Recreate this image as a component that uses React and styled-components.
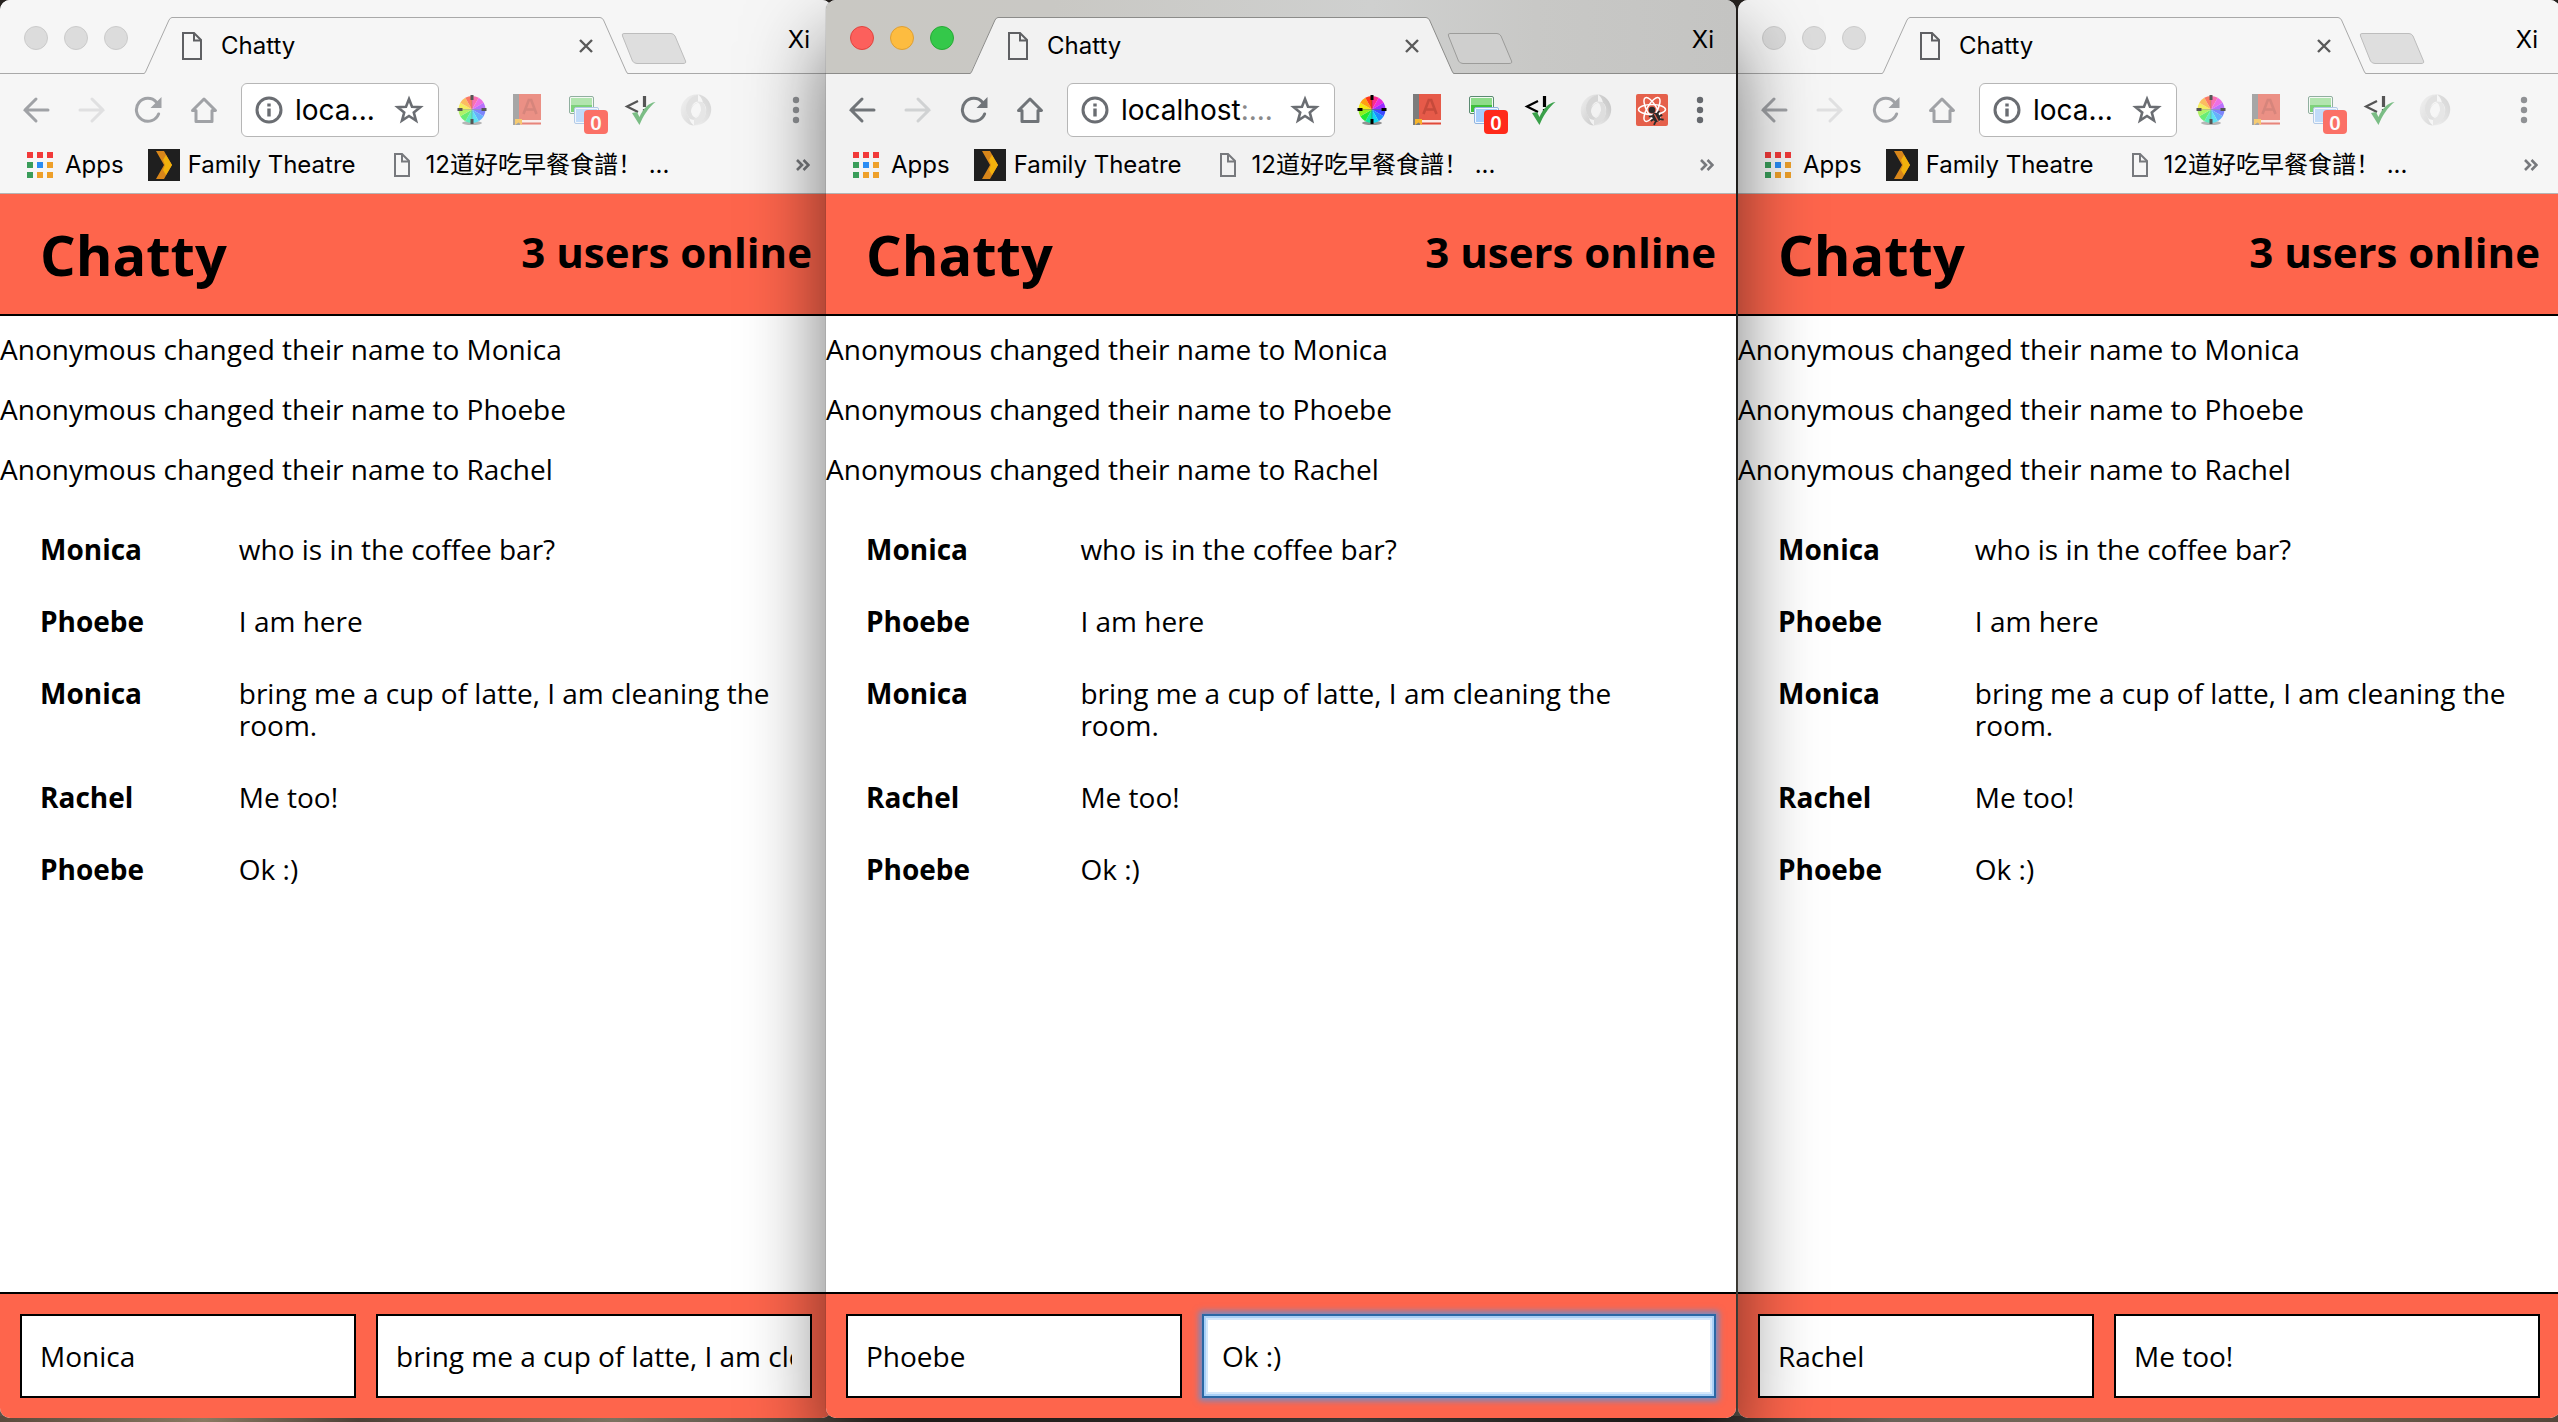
import React from "react";
import styled, { createGlobalStyle, css } from "styled-components";

const GlobalStyle = createGlobalStyle`
  *, *::before, *::after { box-sizing: border-box; }
  body { margin: 0; background: #2b2622; }
  h1, h2, p { margin: 0; }
`;

const chromeFont = `Inter, "Noto Sans CJK SC", sans-serif`;
const pageFont = `"Open Sans", sans-serif`;

/* ---------- desktop and window frame ---------- */

const Desktop = styled.main`
  display: grid;
  grid-template-columns: 826fr 910fr 822fr;
  grid-template-rows: minmax(0, 1fr);
  min-height: 100vh;
  padding-bottom: 4px;
  overflow: hidden;
  background:
    linear-gradient(90deg, #5a4a3c, #8a7a62 8%, #4d4036 14%, #7c7260 24%, #3c3530 36%, #4b443e 44%, #77736e 53%, #4a4540 60%, #2e2a27 66%, #6a6258 74%, #7a6a54 86%, #54463a) bottom / 100% 6px no-repeat,
    linear-gradient(#26221f, #3f4442 50%, #5a564c);
`;

const Frame = styled.section`
  display: flex;
  flex-direction: column;
  min-width: 0;
  border-radius: 10px;
  background: #fff;
  margin-left: ${(p) => p.$gapLeft || 0}px;
  margin-right: -${(p) => p.$overhang || 0}px;
  ${(p) =>
    p.$active &&
    css`
      position: relative;
      z-index: 1;
      box-shadow: 0 0 1px rgba(0, 0, 0, 0.7), 0 40px 80px rgba(0, 0, 0, 0.56);
    `}
`;

const BareButton = styled.button`
  display: flex;
  align-items: center;
  justify-content: center;
  padding: 0;
  border: 0;
  background: none;
  color: inherit;
  font: inherit;
`;

/* ---------- tab strip ---------- */

const TabStrip = styled.div`
  display: flex;
  height: 74px;
  flex: none;
  padding: 0 22px 0 24px;
  border-radius: 10px 10px 0 0;
  font: 24px/32px ${chromeFont};
  color: #000;
  background: ${(p) =>
    p.$active
      ? "linear-gradient(90deg, #c9c8c3, #c9c8c4 25%, #cfd0cf 60%, #c8c8c6 78%, #c4c4c2)"
      : "#f6f6f6"};
  box-shadow: inset 0 -1px ${(p) => (p.$active ? "#8c8c8a" : "#a9a9a9")};
`;

const Lights = styled.div`
  display: flex;
  gap: 16px;
  width: 120px;
  padding-top: 26px;
`;

const Light = styled(BareButton)`
  width: 24px;
  height: 24px;
  border-radius: 50%;
  background: ${(p) => p.$fill};
  border: 1px solid ${(p) => p.$edge};
`;

const Tab = styled.div`
  position: relative;
  display: flex;
  align-items: center;
  width: 484px;
  height: 57px;
  margin-top: 17px;
  padding: 0 35px 0 38px;
  gap: 19px;
`;

const TabShape = styled.svg`
  position: absolute;
  inset: 0;
`;

const TabTitle = styled.span`
  position: relative;
  flex: 1;
`;

const TabClose = styled(BareButton)`
  position: relative;
  width: 14px;
  height: 14px;
`;

const TabIcon = styled.svg`
  position: relative;
`;

const NewTab = styled(BareButton)`
  height: 32px;
  margin: 33px 0 0 -7px;
`;

const Profile = styled(BareButton)`
  height: 32px;
  margin: 24px 0 0 auto;
`;

/* ---------- toolbar ---------- */

const ChromeBody = styled.div`
  display: flex;
  flex-direction: column;
  flex: none;
  height: 120px;
  border-bottom: 1px solid #b4b4b4;
  background: ${(p) => (p.$active ? "#f2f2f2" : "#f6f6f6")};
  font-family: ${chromeFont};
`;

const Toolbar = styled.div`
  display: flex;
  align-items: center;
  padding: 9px 16px 0 8px;
`;

const NavButton = styled(BareButton)`
  width: 56px;
  height: 54px;
  color: ${(p) => (p.$active ? "#707478" : "#a0a2a6")};
  opacity: ${(p) => (p.$disabled ? 0.25 : 1)};
`;

const AddressBar = styled.div`
  display: flex;
  align-items: center;
  flex: 1;
  min-width: 0;
  height: 54px;
  margin: 0 ${(p) => p.$gap}px 0 9px;
  padding: 0 14px 0 13px;
  border: 1px solid #b6b6b6;
  border-radius: 6px;
  background: #fff;
  color: #6a6d72;
`;

const AddressInput = styled.input`
  field-sizing: content;
  min-width: 0;
  margin-left: 12px;
  padding: 0;
  border: 0;
  outline: 0;
  background: none;
  color: #000;
  font: 28px/36px ${chromeFont};
`;

const AddressRest = styled.span`
  color: #8a8a8a;
  font: 28px/36px ${chromeFont};
`;

const StarButton = styled(BareButton)`
  margin-left: auto;
`;

const Extensions = styled.div`
  display: flex;
  margin-right: ${(p) => p.$spare}px;
  opacity: ${(p) => (p.$active ? 1 : 0.65)};
`;

const ExtensionButton = styled(BareButton)`
  position: relative;
  width: 56px;
  height: 54px;
`;

const Badge = styled.span`
  position: absolute;
  left: 28px;
  top: 27px;
  width: 24px;
  height: 24px;
  border-radius: 4px;
  background: #ff2a1a;
  color: #fff;
  font: 600 20px/26px "Noto Sans", sans-serif;
  text-align: center;
`;

const MenuButton = styled(BareButton)`
  width: 40px;
  height: 54px;
  color: ${(p) => (p.$active ? "#66696e" : "#8f9194")};
`;

const Bookmarks = styled.nav`
  display: flex;
  align-items: center;
  height: 56px;
  padding: 0 22px 0 27px;
  font-size: 24px;
  line-height: 32px;
`;

const Bookmark = styled.a`
  display: flex;
  align-items: center;
  gap: ${(p) => p.$gap}px;
  margin-right: ${(p) => p.$after}px;
  color: #000;
  text-decoration: none;
  white-space: nowrap;
`;

const MoreBookmarks = styled(BareButton)`
  margin-left: auto;
  color: #77797d;
`;

/* ---------- chat page ---------- */

const Page = styled.div`
  display: flex;
  flex-direction: column;
  flex: 1;
  min-height: 0;
  font: 28px/32px ${pageFont};
  color: #000;
`;

const PageHeader = styled.header`
  display: flex;
  align-items: center;
  justify-content: space-between;
  height: 122px;
  padding: 0 20px 0 40px;
  border-bottom: 2px solid #000;
  background: #fe654c;
`;

const Brand = styled.h1`
  font-size: 56px;
  line-height: 64px;
`;

const UserCount = styled.h2`
  padding-bottom: 4px;
  font-size: 42px;
  line-height: 48px;
`;

const Feed = styled.div`
  flex: 1;
  padding-top: 17px;
`;

const Notice = styled.p`
  margin-bottom: 28px;
`;

const Message = styled.div`
  display: grid;
  grid-template-columns: 20% 1fr;
  column-gap: 50px;
  padding: 20px 48px 20px 40px;
`;

const Author = styled.strong`
  font-weight: 700;
`;

const Composer = styled.form`
  display: flex;
  gap: 20px;
  height: 126px;
  padding: 20px;
  border-top: 2px solid #000;
  border-radius: 0 0 10px 10px;
  background: #fe654c;
`;

const Field = styled.input`
  min-width: 0;
  height: 84px;
  padding: 0 18px;
  border: 2px solid #000;
  border-radius: 0;
  outline: 0;
  background: #fff;
  color: #000;
  font: 28px/32px ${pageFont};
  flex: ${(p) => (p.$name ? "0 0 336px" : "1")};
  ${(p) =>
    p.$focused &&
    css`
      border-color: #2a67a5;
      box-shadow: inset 0 0 0 2px #a9d0f7, inset 0 0 0 4px #d4e7fb,
        0 0 6px 3px rgba(88, 148, 222, 0.8);
    `}
`;

/* ---------- drawings ---------- */

const DocIcon = ({ as: As = "svg", w = 20, h = 28, color = "#5f6063", stroke = 2 }) => (
  <As width={w} height={h} viewBox={`0 0 ${w} ${h}`} fill="none" stroke={color} strokeWidth={stroke}>
    <path d={`M1 1H${w - 8}L${w - 1} 8V${h - 1}H1Z`} />
    <path d={`M${w - 8} 1V8.500H${w - 1}`} />
  </As>
);

const BackIcon = () => (
  <svg width="28" height="28" viewBox="0 0 28 28" fill="none" stroke="currentColor" strokeWidth="3" strokeLinecap="round">
    <path d="M26 14H3M14 3L3 14L14 25" />
  </svg>
);

const ForwardIcon = () => (
  <svg width="28" height="28" viewBox="0 0 28 28" fill="none" stroke="currentColor" strokeWidth="3" strokeLinecap="round">
    <path d="M2 14H25M14 3L25 14L14 25" />
  </svg>
);

const ReloadIcon = () => (
  <svg width="28" height="28" viewBox="0 0 28 28" fill="none">
    <path d="M22.500 6.200A11.500 11.500 0 1 0 24.600 18" stroke="currentColor" strokeWidth="3" strokeLinecap="round" />
    <path d="M27.500 1V12H16.500Z" fill="currentColor" />
  </svg>
);

const HomeIcon = () => (
  <svg width="28" height="28" viewBox="0 0 28 28" fill="none" stroke="currentColor" strokeWidth="3" strokeLinejoin="round">
    <path d="M2.500 14.500L14 3L25.500 14.500H22V25.500H6V14.500Z" />
  </svg>
);

const InfoIcon = () => (
  <svg width="28" height="28" viewBox="0 0 28 28" fill="none">
    <circle cx="14" cy="14" r="12" stroke="currentColor" strokeWidth="3" />
    <path d="M14 12.500V20.500M14 7.500V10.500" stroke="currentColor" strokeWidth="3.400" />
  </svg>
);

const StarIcon = () => (
  <svg width="30" height="30" viewBox="0 0 30 30" fill="none" stroke="currentColor" strokeWidth="2.600">
    <path d="M15 4L18 11.800L26.300 12.200L19.800 17.500L22 25.600L15 21L8 25.600L10.200 17.500L3.700 12.200L12 11.800Z" />
  </svg>
);

const wheelColors = ["#ff2a8a", "#e82ae0", "#9a2aff", "#3d4bff", "#1a8cff", "#10d8f0", "#12e6a0", "#20e830", "#8cf01a", "#f4ea10", "#ffa010", "#ff3a1a"];

const WheelIcon = () => {
  const wedge = (i) => {
    const at = (k) => {
      const a = (k * Math.PI) / 6 - Math.PI / 2;
      return `${(16 + 13.5 * Math.cos(a)).toFixed(2)} ${(15.5 + 13.5 * Math.sin(a)).toFixed(2)}`;
    };
    return `M16 15.500L${at(i)}A13.500 13.500 0 0 1 ${at(i + 1)}Z`;
  };
  return (
    <svg width="32" height="32" viewBox="0 0 32 32">
      <ellipse cx="16" cy="29" rx="10" ry="2" fill="#000" opacity="0.4" />
      {wheelColors.map((c, i) => (
        <path key={c} d={wedge(i)} fill={c} />
      ))}
      <path d="M16 1V6M16 25V30M1.500 15.500H6.500M25.500 15.500H30.500" stroke="#000" strokeWidth="3" />
      <path d="M16 6V25M6 15.500H26" stroke="#333" strokeWidth="0.600" opacity="0.600" />
    </svg>
  );
};

const BookIcon = () => (
  <svg width="32" height="32" viewBox="0 0 32 32">
    <path d="M2 0H28V31H2Z" fill="#fbe9e6" />
    <path d="M1 0H8V31H1Z" fill="#7c7c7c" />
    <path d="M7 0H29V26H7Z" fill="#e65a49" />
    <path d="M8 28.500H29V30.500H8Z" fill="#e04a3a" />
    <path d="M11.500 20L16.800 6H19.200L24.500 20M13.500 15.500H22.500" fill="none" stroke="#c64a3b" strokeWidth="2.600" />
    <path d="M3 25H10V31L6.500 28.500L3 31Z" fill="#f7b52c" />
  </svg>
);

const WindowsIcon = () => (
  <svg width="32" height="32" viewBox="0 0 32 32">
    <rect x="1.500" y="2.500" width="24" height="17" rx="1.500" fill="#f4faf4" stroke="#5b8a72" />
    <rect x="3" y="4" width="21" height="7" fill="#8edc8a" />
    <rect x="3" y="11" width="21" height="7" fill="#3fbf3a" />
    <rect x="6.500" y="13.500" width="24" height="16" rx="1.500" fill="#f2f8ff" stroke="#8fb4e0" />
    <rect x="8" y="15" width="21" height="13" fill="#a5cdfb" />
  </svg>
);

const ValidatorIcon = () => (
  <svg width="32" height="32" viewBox="0 0 32 32" fill="none">
    <path d="M14 7L3 12.500L14 18" stroke="#000" strokeWidth="2.200" />
    <path d="M20.500 2V13M20.500 15V18" stroke="#000" strokeWidth="3.200" />
    <path d="M8 19L13 18L15.500 23C19 15 24 9 31.500 8C25 13 19 22 15.500 31Z" fill="#3aa04a" />
  </svg>
);

const SwirlIcon = () => (
  <svg width="32" height="32" viewBox="0 0 32 32" fill="none">
    <defs>
      <linearGradient id="swirlLight" x1="0" y1="0" x2="1" y2="1">
        <stop offset="0" stopColor="#f0f0f0" />
        <stop offset="1" stopColor="#c6c6c6" />
      </linearGradient>
      <linearGradient id="swirlDark" x1="1" y1="0" x2="0" y2="1">
        <stop offset="0" stopColor="#c2c2c2" />
        <stop offset="1" stopColor="#ececec" />
      </linearGradient>
    </defs>
    <path d="M18 0.500C4 -0.500 -5 16 5 27C8 30 11 31.500 14 31.500C7 27 6 12 18 8.500C14 10 11 13 11 18C12 22 14 24 18 24.500C14 27 10 26 8 22C4 14 8 4 18 0.500Z" fill="url(#swirlLight)" />
    <path d="M18 0.500C8 3 4 12 7 20C8 24 12 26 17 24.500C13 24 11 21 11 17C11 11 14 8 18 7.500Z" fill="#d6d6d6" />
    <path d="M14 31.500C28 32.500 37 16 27 5C24 2 21 0.500 18 0.500C25 5 26 20 14 23.500C22 21 23 13 19 8.500C22 7 25 10 26 14C27 21 23 28 14 31.500Z" fill="url(#swirlDark)" />
    <path d="M14 31.500C24 29 28 20 25 12C24 8.500 21 7 16 7.500C20 9 21 12 21 16C21 20 18 24 14 24.500Z" fill="#dedede" />
  </svg>
);

const ReactBugIcon = () => (
  <svg width="32" height="32" viewBox="0 0 32 32" fill="none">
    <rect width="32" height="32" rx="2" fill="#e5604b" />
    <g stroke="#fff" strokeWidth="1.500">
      <ellipse cx="16" cy="15.500" rx="13.500" ry="5" />
      <ellipse cx="16" cy="15.500" rx="13.500" ry="5" transform="rotate(60 16 15.500)" />
      <ellipse cx="16" cy="15.500" rx="13.500" ry="5" transform="rotate(120 16 15.500)" />
    </g>
    <circle cx="16" cy="16" r="3.200" fill="#2b2b2b" />
    <g transform="rotate(-28 20 23)">
      <ellipse cx="20" cy="23.500" rx="3.800" ry="5" fill="#2b2b2b" />
      <path d="M14 19L17.500 21M13.500 24H17M14.500 29L18 26.500M26 19L22.500 21M26.500 24H23M25.500 29L22 26.500" stroke="#2b2b2b" strokeWidth="1.800" />
      <path d="M20 19.500V28.500" stroke="#e5604b" strokeWidth="1.200" />
    </g>
  </svg>
);

const KebabIcon = () => (
  <svg width="8" height="28" viewBox="0 0 8 28" fill="currentColor">
    <circle cx="4" cy="4" r="3.200" />
    <circle cx="4" cy="14" r="3.200" />
    <circle cx="4" cy="24" r="3.200" />
  </svg>
);

const AppsIcon = () => {
  const colors = ["#f23a3a", "#f23a3a", "#f23a3a", "#3a9d5a", "#2a8cf4", "#eea02a", "#3a9d5a", "#eea02a", "#eea02a"];
  return (
    <svg width="26" height="26" viewBox="0 0 26 26">
      {colors.map((c, i) => (
        <rect key={i} x={(i % 3) * 10} y={Math.floor(i / 3) * 10} width="6" height="6" fill={c} />
      ))}
    </svg>
  );
};

const PlexIcon = () => (
  <svg width="32" height="32" viewBox="0 0 32 32">
    <rect width="32" height="32" fill="#1f1f1f" />
    <path d="M8 2H16L24 16L16 30H8L16 16Z" fill="#d8861a" />
    <path d="M18 6L24 16L18 26L15 21L17 16L15 11Z" fill="#f2b20c" />
  </svg>
);

const MoreIcon = () => (
  <svg width="14" height="14" viewBox="0 0 14 14" fill="none" stroke="currentColor" strokeWidth="2.600">
    <path d="M1 2L6 7L1 12M7.500 2L12.500 7L7.500 12" />
  </svg>
);

/* ---------- browser chrome ---------- */

const activeLights = [
  ["#fc605c", "#e0443e", "Close"],
  ["#fdbc40", "#de9f34", "Minimize"],
  ["#34c84a", "#27aa35", "Zoom"],
];
const idleLights = activeLights.map(([, , name]) => ["#dcdcdc", "#cbcbcb", name]);

function BrowserTabs({ active }) {
  const face = active ? "#f2f2f2" : "#f6f6f6";
  const line = active ? "#8c8c8a" : "#a9a9a9";
  return (
    <TabStrip $active={active}>
      <Lights>
        {(active ? activeLights : idleLights).map(([fill, edge, name]) => (
          <Light key={name} type="button" aria-label={name} $fill={fill} $edge={edge} />
        ))}
      </Lights>
      <Tab>
        <TabShape width="484" height="57" viewBox="0 0 484 57">
          <path d="M0 57L1 55L25 3Q26.500 0.500 28 0.500H456Q458 0.500 459.500 3L482 54L484 57Z" fill={face} />
          <path d="M0 56.500Q1 56 1.500 55L25 3Q26.500 0.500 28 0.500H456Q458 0.500 459.500 3L482 54Q483 56.500 484 56.500" fill="none" stroke={line} strokeWidth="1" />
        </TabShape>
        <DocIcon as={TabIcon} />
        <TabTitle>Chatty</TabTitle>
        <TabClose type="button" aria-label="Close tab">
          <svg width="14" height="14" viewBox="0 0 14 14" stroke="#5a5a5a" strokeWidth="2.400">
            <path d="M1 1L13 13M13 1L1 13" />
          </svg>
        </TabClose>
      </Tab>
      <NewTab type="button" aria-label="New tab">
        <svg width="66" height="32" viewBox="0 0 66 32">
          <path
            d="M3 0.500H50Q52.500 0.500 54 3L64.500 28Q65.500 30.500 62 30.500H16Q13 30.500 11.500 28L1.500 3Q0.500 0.500 3 0.500Z"
            fill={active ? "#cfcfce" : "#dedede"}
            stroke={active ? "#9c9c9a" : "#bdbdbd"}
          />
        </svg>
      </NewTab>
      <Profile type="button">Xi</Profile>
    </TabStrip>
  );
}

function BrowserToolbar({ active, address, addressRest, gap, spare }) {
  return (
    <Toolbar>
      <NavButton type="button" aria-label="Back" $active={active}><BackIcon /></NavButton>
      <NavButton type="button" aria-label="Forward" $active={active} $disabled><ForwardIcon /></NavButton>
      <NavButton type="button" aria-label="Reload" $active={active}><ReloadIcon /></NavButton>
      <NavButton type="button" aria-label="Home" $active={active}><HomeIcon /></NavButton>
      <AddressBar $gap={gap}>
        <InfoIcon />
        <AddressInput aria-label="Address" defaultValue={address} />
        {addressRest && <AddressRest>{addressRest}</AddressRest>}
        <StarButton type="button" aria-label="Bookmark this page"><StarIcon /></StarButton>
      </AddressBar>
      <Extensions $active={active} $spare={spare}>
        <ExtensionButton type="button" aria-label="Color picker"><WheelIcon /></ExtensionButton>
        <ExtensionButton type="button" aria-label="Dictionary"><BookIcon /></ExtensionButton>
        <ExtensionButton type="button" aria-label="Windows">
          <WindowsIcon />
          <Badge>0</Badge>
        </ExtensionButton>
        <ExtensionButton type="button" aria-label="HTML validator"><ValidatorIcon /></ExtensionButton>
        <ExtensionButton type="button" aria-label="JSON viewer"><SwirlIcon /></ExtensionButton>
        {active && <ExtensionButton type="button" aria-label="React tools"><ReactBugIcon /></ExtensionButton>}
      </Extensions>
      <MenuButton type="button" aria-label="Menu" $active={active}><KebabIcon /></MenuButton>
    </Toolbar>
  );
}

function BookmarkBar() {
  return (
    <Bookmarks>
      <Bookmark href="#apps" $gap={12} $after={24}><AppsIcon />Apps</Bookmark>
      <Bookmark href="#family-theatre" $gap={8} $after={38}><PlexIcon />Family Theatre</Bookmark>
      <Bookmark href="#breakfast" $gap={16} $after={0}>
        <DocIcon w={16} h={24} color="#77797d" />
        12道好吃早餐食譜！ ...
      </Bookmark>
      <MoreBookmarks type="button" aria-label="More bookmarks"><MoreIcon /></MoreBookmarks>
    </Bookmarks>
  );
}

/* ---------- chat ---------- */

const notices = ["Monica", "Phoebe", "Rachel"];
const messages = [
  ["Monica", "who is in the coffee bar?"],
  ["Phoebe", "I am here"],
  ["Monica", "bring me a cup of latte, I am cleaning the room."],
  ["Rachel", "Me too!"],
  ["Phoebe", "Ok :)"],
];

function Chat({ user, draft, focused }) {
  return (
    <Page>
      <PageHeader>
        <Brand>Chatty</Brand>
        <UserCount>3 users online</UserCount>
      </PageHeader>
      <Feed>
        {notices.map((name) => (
          <Notice key={name}>Anonymous changed their name to {name}</Notice>
        ))}
        {messages.map(([author, text], i) => (
          <Message key={i}>
            <Author>{author}</Author>
            <p>{text}</p>
          </Message>
        ))}
      </Feed>
      <Composer>
        <Field $name aria-label="Your name" defaultValue={user} />
        <Field $focused={focused} aria-label="Message" defaultValue={draft} />
      </Composer>
    </Page>
  );
}

function BrowserWindow({ active, gapLeft, overhang, toolbar, chat }) {
  return (
    <Frame $active={active} $gapLeft={gapLeft} $overhang={overhang}>
      <BrowserTabs active={active} />
      <ChromeBody $active={active}>
        <BrowserToolbar active={active} {...toolbar} />
        <BookmarkBar />
      </ChromeBody>
      <Chat {...chat} focused={active} />
    </Frame>
  );
}

export default function App() {
  return (
    <>
      <GlobalStyle />
      <Desktop>
        <BrowserWindow
          overhang={6}
          toolbar={{ address: "loca...", gap: 5, spare: 52 }}
          chat={{ user: "Monica", draft: "bring me a cup of latte, I am cleaning the room." }}
        />
        <BrowserWindow
          active
          toolbar={{ address: "localhost", addressRest: ":...", gap: 9, spare: 0 }}
          chat={{ user: "Phoebe", draft: "Ok :)" }}
        />
        <BrowserWindow
          gapLeft={2}
          overhang={2}
          toolbar={{ address: "loca...", gap: 6, spare: 41 }}
          chat={{ user: "Rachel", draft: "Me too!" }}
        />
      </Desktop>
    </>
  );
}
